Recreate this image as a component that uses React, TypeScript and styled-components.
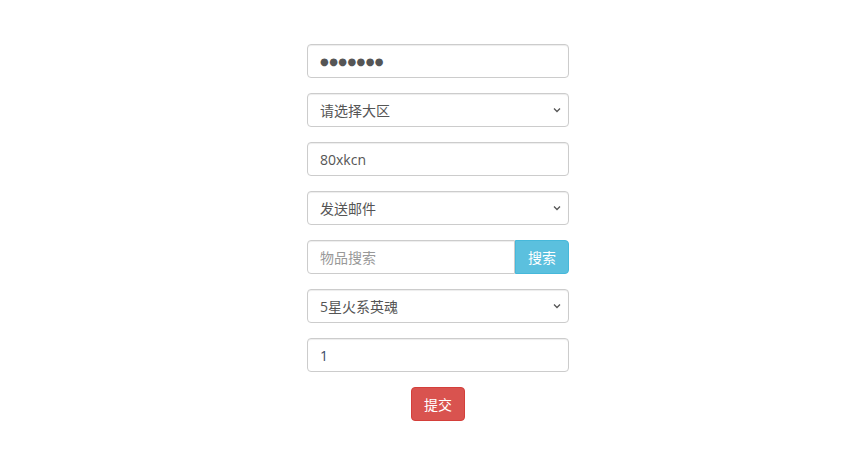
import React from "react";
import styled, { createGlobalStyle } from "styled-components";

const FONT = `"Open Sans", "Noto Sans CJK SC", sans-serif`;

const GlobalStyle = createGlobalStyle`
    body {
        margin: 0;
        background: #fff;
        font-family: ${FONT};
        font-size: 14px;
        color: #555;
    }
    * { box-sizing: border-box; }
`;

const Page = styled.div`
    width: 848px;
    padding: 44px 0 0 28px;
    display: flex;
    justify-content: center;
`;

const Form = styled.form`
    width: 262px;
    display: flex;
    flex-direction: column;
    gap: 15px;
`;

const Field = styled.input<{ $color?: string }>`
    display: block;
    width: 100%;
    height: 34px;
    padding: 6px 12px;
    font-family: ${FONT};
    font-size: 14px;
    color: ${(p) => p.$color || "#555"};
    background: #fff;
    border: 1px solid #ccc;
    border-radius: 4px;
    box-shadow: inset 0 1px 1px rgba(0, 0, 0, 0.075);
    outline: none;
    &::placeholder {
        color: #999;
    }
`;

const Password = styled(Field)`
    font-family: "DejaVu Sans", sans-serif;
    font-size: 10px;
    letter-spacing: 0.4px;
    color: #555;
`;

const SelectWrap = styled.div`
    position: relative;
`;

const Select = styled.select`
    appearance: none;
    display: block;
    width: 100%;
    height: 34px;
    padding: 0 30px 0 12px;
    font-family: ${FONT};
    font-size: 14px;
    color: #555;
    background: #fff;
    border: 1px solid #ccc;
    border-radius: 4px;
    box-shadow: inset 0 1px 1px rgba(0, 0, 0, 0.075);
    outline: none;
`;

const Chevron = styled.svg`
    position: absolute;
    right: 7px;
    top: 13px;
    width: 10px;
    height: 8px;
    pointer-events: none;
`;

const Group = styled.div`
    display: flex;
`;

const GroupField = styled(Field)`
    border-radius: 4px 0 0 4px;
    flex: 1;
`;

const Button = styled.button<{ $bg: string; $border: string }>`
    height: 34px;
    padding: 0 12px;
    font-family: ${FONT};
    font-size: 14px;
    color: #fff;
    background: ${(p) => p.$bg};
    border: 1px solid ${(p) => p.$border};
    border-radius: 4px;
    cursor: pointer;
`;

const GroupButton = styled(Button)`
    width: 54px;
    border-radius: 0 4px 4px 0;
`;

const SubmitButton = styled(Button)`
    width: 54px;
`;

const Actions = styled.div`
    display: flex;
    justify-content: center;
`;

function Dropdown(props: { options: string[] }) {
    return (
        <SelectWrap>
            <Select defaultValue={props.options[0]}>
                {props.options.map((o) => (
                    <option key={o}>{o}</option>
                ))}
            </Select>
            <Chevron viewBox="0 0 10 8">
                <path d="M2 2.5 L5 5.5 L8 2.5" fill="none" stroke="#555" strokeWidth="1.3" />
            </Chevron>
        </SelectWrap>
    );
}

export default function App() {
    return (
        <>
            <GlobalStyle />
            <Page>
                <Form onSubmit={(e) => e.preventDefault()}>
                    <Password type="text" defaultValue="●●●●●●●" />
                    <Dropdown options={["请选择大区"]} />
                    <Field type="text" defaultValue="80xkcn" />
                    <Dropdown options={["发送邮件"]} />
                    <Group>
                        <GroupField type="text" placeholder="物品搜索" />
                        <GroupButton type="button" $bg="#5bc0de" $border="#46b8da">搜索</GroupButton>
                    </Group>
                    <Dropdown options={["5星火系英魂"]} />
                    <Field type="text" defaultValue="1" $color="#3a4a66" />
                    <Actions>
                        <SubmitButton type="submit" $bg="#d9534f" $border="#d43f3a">提交</SubmitButton>
                    </Actions>
                </Form>
            </Page>
        </>
    );
}
